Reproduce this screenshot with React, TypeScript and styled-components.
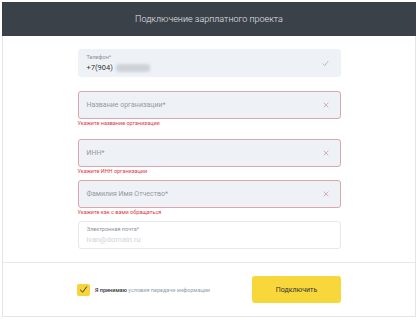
import React from 'react';
import styled, { createGlobalStyle } from 'styled-components';

const GlobalStyle = createGlobalStyle`
  body {
    margin: 0;
    background: #ffffff;
    font-family: Roboto, "Liberation Sans", Arial, sans-serif;
  }
`;

type FieldData = {
  placeholder: string;
  error?: string;
  gap: number;
};

const fields: FieldData[] = [
  { placeholder: 'Название организации*', error: 'Укажите название организации', gap: 12 },
  { placeholder: 'ИНН*', error: 'Укажите ИНН организации', gap: 5 },
  { placeholder: 'Фамилия Имя Отчество*', error: 'Укажите как с вами обращаться', gap: 5 },
];

const CheckIcon = ({ color = '#a9aeb5', size = 7 }: { color?: string; size?: number }) => (
  <svg width={size} height={size} viewBox="0 0 10 10" fill="none">
    <path d="M1.5 5.5 L4 8 L8.5 2" stroke={color} strokeWidth="1.1" strokeLinecap="round" strokeLinejoin="round" />
  </svg>
);

const CrossIcon = () => (
  <svg width="6" height="6" viewBox="0 0 10 10" fill="none">
    <path d="M1.5 1.5 L8.5 8.5 M8.5 1.5 L1.5 8.5" stroke="#d49a9c" strokeWidth="1.3" strokeLinecap="round" />
  </svg>
);

const App: React.FC = () => {
  return (
    <>
      <GlobalStyle />
      <Page>
        <Card>
          <Header>Подключение зарплатного проекта</Header>
          <Form>
            <Group $gap={14}>
              <Field>
                <FieldText>
                  <Label>Телефон*</Label>
                  <Value>
                    +7(904) <Blurred />
                  </Value>
                </FieldText>
                <IconSlot>
                  <CheckIcon />
                </IconSlot>
              </Field>
            </Group>
            {fields.map((f) => (
              <Group key={f.placeholder} $gap={f.gap}>
                <Field $invalid>
                  <Placeholder>{f.placeholder}</Placeholder>
                  <IconSlot>
                    <CrossIcon />
                  </IconSlot>
                </Field>
                {f.error && <ErrorText>{f.error}</ErrorText>}
              </Group>
            ))}
            <Group $gap={0}>
              <Field $plain>
                <FieldText>
                  <Label>Электронная почта*</Label>
                  <Hint>ivan@domain.ru</Hint>
                </FieldText>
              </Field>
            </Group>
          </Form>
          <Footer>
            <Agree>
              <Checkbox>
                <CheckIcon color="#3a3a3a" size={9} />
              </Checkbox>
              <AgreeText>
                <b>Я принимаю</b> <Link>условия передачи информации</Link>
              </AgreeText>
            </Agree>
            <SubmitButton>Подключить</SubmitButton>
          </Footer>
        </Card>
      </Page>
    </>
  );
};

const Page = styled.div`
  width: 418px;
  height: 320px;
  padding: 2px;
  box-sizing: border-box;
`;

const Card = styled.div`
  width: 414px;
  height: 315px;
  border: 1px solid #e2e4e7;
  border-top: none;
  box-sizing: border-box;
  display: flex;
  flex-direction: column;
`;

const Header = styled.div`
  height: 34px;
  margin: 0 -1px;
  background: #3b4149;
  color: #e4e7eb;
  font-size: 9px;
  font-weight: 300;
  display: flex;
  align-items: center;
  justify-content: center;
`;

const Form = styled.div`
  width: 263px;
  margin: 0 auto;
  padding: 13px 0 13px;
  display: flex;
  flex-direction: column;
`;

const Group = styled.div<{ $gap: number }>`
  margin-bottom: ${(p) => p.$gap}px;
  display: flex;
  flex-direction: column;
`;

const Field = styled.div<{ $invalid?: boolean; $plain?: boolean }>`
  height: 28px;
  box-sizing: border-box;
  border-radius: 3px;
  padding: 0 8px;
  display: flex;
  align-items: center;
  justify-content: space-between;
  background: ${(p) => (p.$plain ? '#ffffff' : '#eef2f7')};
  border: 1px solid
    ${(p) => (p.$invalid ? '#d9a7aa' : p.$plain ? '#e6e8eb' : '#eef2f7')};
`;

const FieldText = styled.div`
  display: flex;
  flex-direction: column;
  gap: 2px;
`;

const Label = styled.span`
  font-size: 5.5px;
  color: #8b9099;
  line-height: 7px;
`;

const Value = styled.span`
  font-size: 7.5px;
  color: #2f3338;
  line-height: 10px;
  display: flex;
  align-items: center;
  gap: 3px;
`;

const Blurred = styled.span`
  display: inline-block;
  width: 34px;
  height: 8px;
  background: #cdd2d9;
  border-radius: 3px;
  filter: blur(1.5px);
`;

const Hint = styled.span`
  font-size: 7.5px;
  color: #cfd2d7;
  line-height: 10px;
`;

const Placeholder = styled.span`
  font-size: 7px;
  color: #959aa2;
`;

const IconSlot = styled.span`
  display: flex;
  align-items: center;
  margin-right: 3px;
`;

const ErrorText = styled.span`
  font-size: 5.5px;
  line-height: 8px;
  color: #e0383e;
`;

const Footer = styled.div`
  flex: 1;
  border-top: 1px solid #e6e8eb;
  display: flex;
  align-items: center;
  justify-content: space-between;
  padding: 0 74px 0 74px;
`;

const Agree = styled.label`
  display: flex;
  align-items: center;
  gap: 5px;
`;

const Checkbox = styled.span`
  width: 13px;
  height: 12px;
  border-radius: 2px;
  background: #f6d43a;
  display: flex;
  align-items: center;
  justify-content: center;
`;

const AgreeText = styled.span`
  font-size: 5.5px;
  color: #2f3338;

  b {
    font-weight: 500;
  }
`;

const Link = styled.span`
  color: #8e9cae;
`;

const SubmitButton = styled.button`
  width: 89px;
  height: 27px;
  border: none;
  border-radius: 3px;
  background: #f8d73a;
  color: #2f3338;
  font-family: inherit;
  font-size: 7px;
  cursor: pointer;
`;

export default App;
